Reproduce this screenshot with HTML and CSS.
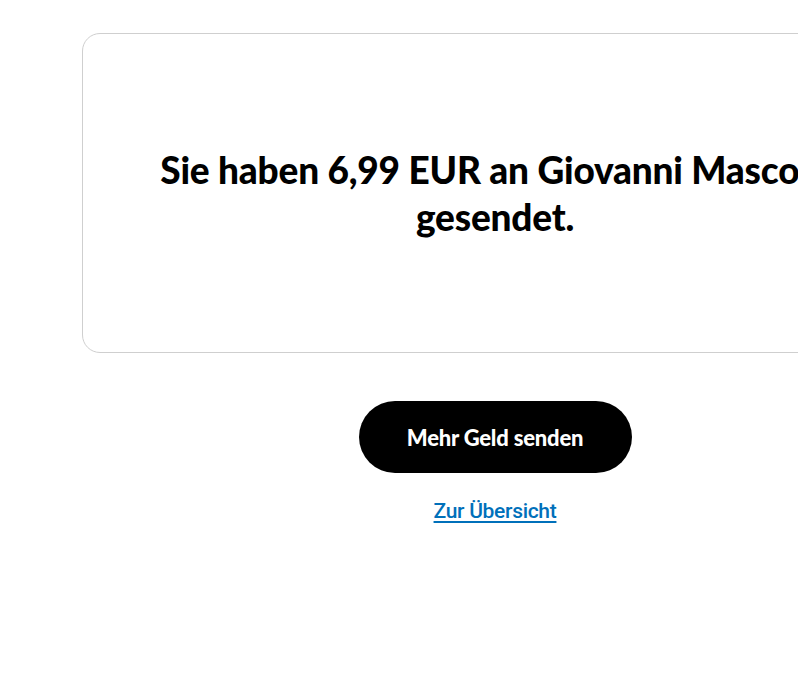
FILE: index.html
```html
<!DOCTYPE html>
<html lang="de">
<head>
  <meta charset="UTF-8" />
  <meta name="viewport" content="width=device-width, initial-scale=1.0" />
  <title>Zahlung gesendet</title>
  <link rel="stylesheet" href="styles.css">
</head>
<body>
  <div class="page">
    <div class="result-card">
      <h1 class="result-title">Sie haben 6,99 EUR an Giovanni Mascolo gesendet.</h1>
    </div>

    <div class="result-actions">
      <button class="send-btn">Mehr Geld senden</button>
      <a class="overview-link" href="#">Zur Übersicht</a>
    </div>
  </div>
</body>
</html>
```

FILE: styles.css
```css
body {
  margin: 0;
  background: #fff;
  font-family: 'Lato', 'Noto Sans', sans-serif;
  color: #000;
}

.page {
  min-width: 990px;
  padding-top: 33px;
}

.result-card {
  margin: 0 82px;
  height: 318px;
  border: 1px solid #cfcfcf;
  border-radius: 18px;
  display: flex;
  align-items: center;
  justify-content: center;
  padding: 0 70px;
}

.result-title {
  margin: 0;
  max-width: 700px;
  font-size: 37px;
  line-height: 47px;
  font-weight: 900;
  text-align: center;
  letter-spacing: -0.2px;
}

.result-actions {
  display: flex;
  flex-direction: column;
  align-items: center;
  margin-top: 48px;
}

.send-btn {
  width: 273px;
  height: 72px;
  border: none;
  border-radius: 36px;
  background: #000;
  color: #fff;
  font-family: 'Lato', sans-serif;
  font-size: 22px;
  font-weight: 900;
  letter-spacing: -0.2px;
  cursor: pointer;
}

.overview-link {
  margin-top: 26px;
  font-family: 'Roboto', 'Liberation Sans', sans-serif;
  font-size: 21px;
  font-weight: 500;
  color: #0070ba;
  text-decoration: underline;
  text-underline-offset: 3px;
  letter-spacing: -0.3px;
}
```
